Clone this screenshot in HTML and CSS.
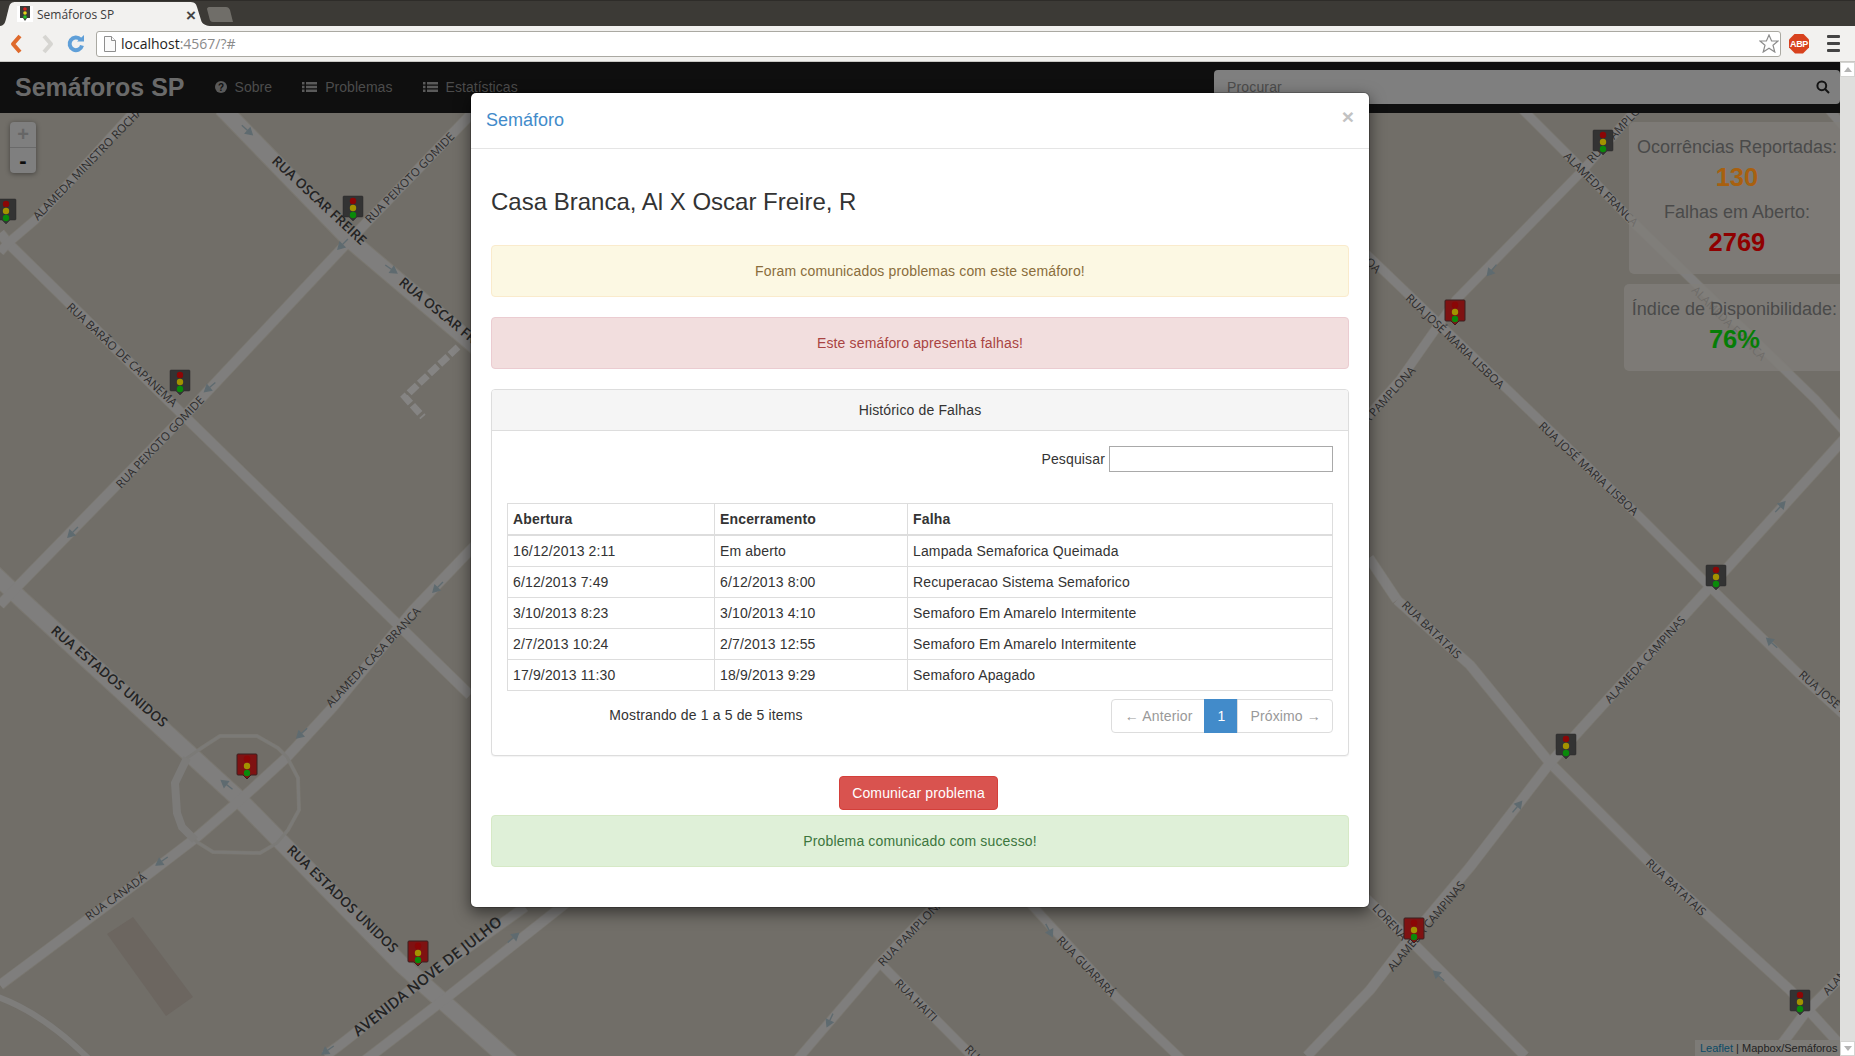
FILE: index.html
```html
<!DOCTYPE html>
<html lang="pt-BR">
<head>
<meta charset="utf-8">
<title>Semáforos SP</title>
<link rel="stylesheet" href="styles.css">
</head>
<body>
<div class="tabstrip">
  <div class="tab">
    <svg class="tab-shape" width="214" height="24" viewBox="0 2 214 24"><path d="M0 26C5 26 6 23 7 19L10 7C11 3 13 2 17 2H190C195 2 197 3 198 7L202 20C203 24 207 26 213 26Z"/></svg>
    <span class="favicon"><svg width="16" height="16" viewBox="0 0 16 16"><path class="fav-body" d="M3 0H13V12H10L8 15L6 12H3Z"/><circle class="lamp-r" cx="8" cy="3" r="1.8"/><circle class="lamp-y" cx="8" cy="7" r="1.8"/><circle class="lamp-g" cx="8" cy="11" r="1.8"/></svg></span>
    <span class="tab-title">Semáforos SP</span>
    <span class="tab-close">×</span>
  </div>
  <svg class="newtab" width="26" height="15" viewBox="0 0 26 15"><path d="M2 0H19C21 0 22 1 23 3L26 15H6C4 15 3 14 2.600 12L0 2C0 1 1 0 2 0Z"/></svg>
</div>
<div class="toolbar">
  <svg class="tb-btn" width="26" height="22" viewBox="0 0 26 22"><path class="ic-back" d="M16 3L9 11L16 19" /></svg>
  <svg class="tb-btn tb-fwd" width="26" height="22" viewBox="0 0 26 22"><path class="ic-fwd" d="M10 3L17 11L10 19"/></svg>
  <svg class="tb-btn tb-reload" width="20" height="20" viewBox="0 0 20 20"><path class="ic-reload" d="M14.500 5.500A6.300 6.300 0 1 0 16 11.500"/><path class="ic-reload-head" d="M11 7.500H18V1Z"/></svg>
  <div class="omnibox">
    <svg class="doc" width="12" height="16" viewBox="0 0 12 16"><path d="M.5.500H7.500L11.500 4.500V15.500H.5Z"/><path d="M7.500.500V4.500H11.500"/></svg>
    <span class="url">localhost<span class="url-rest">:4567/?#</span></span>
    <svg class="star" width="20" height="19" viewBox="0 0 20 19"><path d="M10 1L12.600 7H19L14 11.200L15.800 18L10 14.200L4.200 18L6 11.200L1 7H7.400Z"/></svg>
  </div>
  <div class="abp"><span>ABP</span></div>
  <div class="menu"><i></i><i></i><i></i></div>
</div>
<div class="page">
  <div class="viewport">
    <svg class="map" width="1840" height="994" viewBox="0 62 1840 994">
      <defs>
        <g id="wide">
          <path d="M222 108L350 240L480 350"/>
          <path d="M-15 565L22 600L193 757L240 800L400 963L430 990L520 1070"/>
        </g>
        <g id="mid">
          <path d="M0 233L8 243L178 410L470 695"/>
          <path d="M480 105L367 222L347 243L190 410L17 587L0 605"/>
          <path d="M480 540L413 610L333 707L287 757L240 800L197 837L150 873L0 985"/>
          <path d="M1397 600L1470 665L1550 763L1647 860L1790 990L1845 1050"/>
          <path d="M1369 558L1397 600"/>
          <path d="M1845 438L1710 587L1550 763L1470 867L1403 947L1370 990L1307 1056"/>
          <path d="M1360 893L1413 943L1525 1056"/>
          <path d="M525 907L427 977L340 1045L325 1056"/>
          <path d="M570 900L450 995L320 1095"/>
          <path d="M1845 973L1805 1013L1770 1060"/>
        </g>
        <g id="thin">
          <path d="M140 105L35 220L8 243L0 252"/>
          <path d="M1360 248L1508 390L1640 517L1710 587L1798 673L1845 716"/>
          <path d="M1518 105L1583 170L1638 227L1816 400L1845 432"/>
          <path d="M1640 105L1583 170L1456 300L1400 380L1360 425"/>
          <path d="M1825 105L1845 128"/>
          <path d="M940 900L880 963L797 1060"/>
          <path d="M880 963L976 1060"/>
          <path d="M1027 900L1116 997L1182 1060"/>
        </g>
        <g id="ring">
          <path d="M220 736H257L278 748L287 757L298 778L299 810L288 830L277 843L260 853L213 852L197 842L182 827L177 813L175 783L187 758L203 747Z"/>
        </g>
        <path id="arrow" d="M-7 0H3M7 0L1-3.500V3.500Z"/>
        <g id="lamps">
          <circle class="lamp-r" cx="0" cy="5" r="3.200"/>
          <circle class="lamp-y" cx="0" cy="12" r="3.200"/>
          <circle class="lamp-g" cx="0" cy="19" r="3.200"/>
        </g>
        <path id="pin" d="M-9 0H9Q10 0 10 1V20Q10 21 9 21H4L0 25L-4 21H-9Q-10 21-10 20V1Q-10 0-9 0Z"/>
      </defs>

      <path class="building" d="M133 917L193 997L166 1016L107 934Z"/>
      <path class="curve" d="M-5 996C30 1008 60 1030 90 1060"/>
      <path class="dash" d="M458 347L410 392L405 397L423 417"/>

      <use href="#wide" class="case w16"/>
      <use href="#mid" class="case w11"/>
      <use href="#thin" class="case w10"/>
      <use href="#ring" class="case w5"/>
      <use href="#wide" class="fill w16f"/>
      <use href="#mid" class="fill w11f"/>
      <use href="#thin" class="fill w10f"/>
      <use href="#ring" class="fill w5f"/>
      <path class="leftarc" d="M187 758L175 783L177 813L182 827L195 840"/>

      <g class="arrows">
        <use href="#arrow" transform="translate(247 130) rotate(42)"/>
        <use href="#arrow" transform="translate(343 244) rotate(135)"/>
        <use href="#arrow" transform="translate(391 269) rotate(35)"/>
        <use href="#arrow" transform="translate(210 387) rotate(140)"/>
        <use href="#arrow" transform="translate(73 532) rotate(135)"/>
        <use href="#arrow" transform="translate(438 587) rotate(135)"/>
        <use href="#arrow" transform="translate(227 785) rotate(218)"/>
        <use href="#arrow" transform="translate(302 733) rotate(137)"/>
        <use href="#arrow" transform="translate(162 861) rotate(145)"/>
        <use href="#arrow" transform="translate(328 1050) rotate(145)"/>
        <use href="#arrow" transform="translate(494 923) rotate(145)"/>
        <use href="#arrow" transform="translate(513 938) rotate(-40)"/>
        <use href="#arrow" transform="translate(830 1020) rotate(115)"/>
        <use href="#arrow" transform="translate(1049 930) rotate(62)"/>
        <use href="#arrow" transform="translate(1772 643) rotate(222)"/>
        <use href="#arrow" transform="translate(1517 807) rotate(-50)"/>
        <use href="#arrow" transform="translate(1439 976) rotate(222)"/>
        <use href="#arrow" transform="translate(1780 507) rotate(-47)"/>
        <use href="#arrow" transform="translate(1492 270) rotate(130)"/>
      </g>

      <g class="labels">
        <text x="38" y="221" transform="rotate(-46 38 221)">ALAMEDA MINISTRO ROCHA</text>
        <text class="strong" x="271" y="162" transform="rotate(43 271 162)">RUA OSCAR FREIRE</text>
        <text class="strong" x="398" y="284" transform="rotate(39 398 284)">RUA OSCAR FREIRE</text>
        <text x="370" y="224" transform="rotate(-45.500 370 224)">RUA PEIXOTO GOMIDE</text>
        <text x="66" y="308" transform="rotate(43 66 308)">RUA BARÃO DE CAPANEMA</text>
        <text x="121" y="489" transform="rotate(-46.500 121 489)">RUA PEIXOTO GOMIDE</text>
        <text class="strong" x="50" y="632" transform="rotate(40.500 50 632)">RUA ESTADOS UNIDOS</text>
        <text class="strong" x="286" y="851" transform="rotate(44 286 851)">RUA ESTADOS UNIDOS</text>
        <text x="331" y="708" transform="rotate(-46.800 331 708)">ALAMEDA CASA BRANCA</text>
        <text x="89" y="921" transform="rotate(-35.700 89 921)">RUA CANADÁ</text>
        <text class="avenue" x="358" y="1037" transform="rotate(-38 358 1037)">AVENIDA NOVE DE JULHO</text>
        <text x="1563" y="157" transform="rotate(45 1563 157)">ALAMEDA FRANCA</text>
        <text x="1691" y="291" transform="rotate(45 1691 291)">ALAMEDA FRANCA</text>
        <text x="1592" y="164" transform="rotate(-47 1592 164)">RUA PAMPLONA</text>
        <text class="end" x="1416" y="371" transform="rotate(-48 1416 371)">RUA PAMPLONA</text>
        <text x="1405" y="299" transform="rotate(43.800 1405 299)">RUA JOSÉ MARIA LISBOA</text>
        <text x="1538" y="427" transform="rotate(43 1538 427)">RUA JOSÉ MARIA LISBOA</text>
        <text class="end" x="1376" y="274" transform="rotate(45 1376 274)">LISBOA</text>
        <text x="1401" y="606" transform="rotate(44 1401 606)">RUA BATATAIS</text>
        <text x="1645" y="864" transform="rotate(43 1645 864)">RUA BATATAIS</text>
        <text x="1610" y="704" transform="rotate(-47.600 1610 704)">ALAMEDA CAMPINAS</text>
        <text x="1393" y="972" transform="rotate(-50 1393 972)">ALAMEDA CAMPINAS</text>
        <text class="end" x="1402" y="941" transform="rotate(47 1402 941)">LORENA</text>
        <text x="1798" y="676" transform="rotate(41 1798 676)">RUA JOSÉ MARIA LISBOA</text>
        <text x="1828" y="996" transform="rotate(-48 1828 996)">ALAMEDA</text>
        <text x="1056" y="941" transform="rotate(46 1056 941)">RUA GUARARÁ</text>
        <text x="883" y="967" transform="rotate(-46 883 967)">RUA PAMPLONA</text>
        <text x="894" y="984" transform="rotate(45 894 984)">RUA HAITI</text>
        <text x="964" y="1050" transform="rotate(45 964 1050)">RUA</text>
      </g>

      <g class="pins-dark">
        <g transform="translate(353 196)"><use href="#pin"/><use href="#lamps"/></g>
        <g transform="translate(180 370)"><use href="#pin"/><use href="#lamps"/></g>
        <g transform="translate(6 199)"><use href="#pin"/><use href="#lamps"/></g>
        <g transform="translate(1603 130)"><use href="#pin"/><use href="#lamps"/></g>
        <g transform="translate(1716 565)"><use href="#pin"/><use href="#lamps"/></g>
        <g transform="translate(1566 734)"><use href="#pin"/><use href="#lamps"/></g>
        <g transform="translate(1800 990)"><use href="#pin"/><use href="#lamps"/></g>
      </g>
      <g class="pins-red">
        <g transform="translate(247 754)"><use href="#pin"/><use href="#lamps"/></g>
        <g transform="translate(418 941)"><use href="#pin"/><use href="#lamps"/></g>
        <g transform="translate(1455 300)"><use href="#pin"/><use href="#lamps"/></g>
        <g transform="translate(1414 918)"><use href="#pin"/><use href="#lamps"/></g>
      </g>
    </svg>

    <nav class="navbar">
      <a class="brand">Semáforos SP</a>
      <a class="nav-link">
        <svg class="nav-ic" width="12" height="14" viewBox="0 0 12 14"><circle cx="6" cy="7" r="6"/><text class="q" x="6" y="10.500">?</text></svg>Sobre
      </a>
      <a class="nav-link">
        <svg class="nav-ic list" width="15" height="14" viewBox="0 0 15 14"><path d="M0 2H2.500V4.500H0ZM4 2H15V4.500H4ZM0 5.800H2.500V8.300H0ZM4 5.800H15V8.300H4ZM0 9.600H2.500V12.100H0ZM4 9.600H15V12.100H4Z"/></svg>Problemas
      </a>
      <a class="nav-link">
        <svg class="nav-ic list" width="15" height="14" viewBox="0 0 15 14"><path d="M0 2H2.500V4.500H0ZM4 2H15V4.500H4ZM0 5.800H2.500V8.300H0ZM4 5.800H15V8.300H4ZM0 9.600H2.500V12.100H0ZM4 9.600H15V12.100H4Z"/></svg>Estatísticas
      </a>
      <div class="search">
        <span class="search-ph">Procurar</span>
        <svg class="search-ic" width="14" height="14" viewBox="0 0 14 14"><circle cx="5.800" cy="5.800" r="4.400"/><path d="M9 9L13 13"/></svg>
      </div>
    </nav>

    <div class="zoomctl">
      <div class="zoom-in">+</div>
      <div class="zoom-out">-</div>
    </div>

    <div class="legends">
      <div class="legend">
        <div class="stat"><div class="stat-label">Ocorrências Reportadas:</div><div class="stat-value orange">130</div></div>
        <div class="stat"><div class="stat-label">Falhas em Aberto:</div><div class="stat-value red">2769</div></div>
      </div>
      <div class="legend">
        <div class="stat"><div class="stat-label">Índice de Disponibilidade:</div><div class="stat-value green">76%</div></div>
      </div>
    </div>

    <div class="attribution"><span class="attr-link">Leaflet</span> | Mapbox/Semáforos SP</div>

    <div class="overlay">
      <div class="modal">
        <div class="modal-header">
          <span class="modal-close">×</span>
          <h4 class="modal-title">Semáforo</h4>
        </div>
        <div class="modal-body">
          <h3 class="place">Casa Branca, Al X Oscar Freire, R</h3>
          <div class="alert alert-warning">Foram comunicados problemas com este semáforo!</div>
          <div class="alert alert-danger">Este semáforo apresenta falhas!</div>
          <div class="panel">
            <div class="panel-heading">Histórico de Falhas</div>
            <div class="panel-body">
              <div class="filter"><label class="filter-label" for="q">Pesquisar</label><input class="filter-input" id="q" type="text"></div>
              <table class="history">
                <thead>
                  <tr><th class="col-a">Abertura</th><th class="col-b">Encerramento</th><th>Falha</th></tr>
                </thead>
                <tbody>
                  <tr><td>16/12/2013 2:11</td><td>Em aberto</td><td>Lampada Semaforica Queimada</td></tr>
                  <tr><td>6/12/2013 7:49</td><td>6/12/2013 8:00</td><td>Recuperacao Sistema Semaforico</td></tr>
                  <tr><td>3/10/2013 8:23</td><td>3/10/2013 4:10</td><td>Semaforo Em Amarelo Intermitente</td></tr>
                  <tr><td>2/7/2013 10:24</td><td>2/7/2013 12:55</td><td>Semaforo Em Amarelo Intermitente</td></tr>
                  <tr><td>17/9/2013 11:30</td><td>18/9/2013 9:29</td><td>Semaforo Apagado</td></tr>
                </tbody>
              </table>
              <div class="table-foot">
                <div class="info">Mostrando de 1 a 5 de 5 items</div>
                <ul class="pagination">
                  <li class="page-item">← Anterior</li>
                  <li class="page-item active">1</li>
                  <li class="page-item">Próximo →</li>
                </ul>
              </div>
            </div>
          </div>
          <div class="action"><button class="btn-danger" type="button">Comunicar problema</button></div>
          <div class="alert alert-success">Problema comunicado com sucesso!</div>
        </div>
      </div>
    </div>
  </div>
  <div class="scrollbar">
    <div class="sb-btn"><span class="sb-up"></span></div>
    <div class="sb-btn"><span class="sb-down"></span></div>
  </div>
</div>
</body>
</html>
```
FILE: styles.css
```css
* { box-sizing: border-box; }
html, body { margin: 0; padding: 0; }
body {
  width: 1855px;
  height: 1056px;
  overflow: hidden;
  display: flex;
  flex-direction: column;
  font-family: "Liberation Sans", Arial, sans-serif;
  font-size: 14px;
  line-height: 20px;
  color: #333;
  background: #716e68;
}

/* Browser chrome */
.tabstrip {
  height: 26px;
  flex: none;
  background: #3c3a36;
  border-top: 1px solid #2e2c29;
  padding-top: 1px;
  display: flex;
  align-items: flex-start;
  position: relative;
}
.tab {
  position: relative;
  width: 205px;
  height: 24px;
  margin-left: -1px;
  display: flex;
  align-items: center;
  padding-left: 18px;
}
.tab-shape { position: absolute; left: 0; top: 0; }
.tab-shape path { fill: #f2f1ef; }
.favicon {
  position: relative;
  width: 16px;
  height: 16px;
  background: #fff;
  margin-right: 4px;
}
.favicon svg { display: block; }
.fav-body { fill: #3a3a38; }
.lamp-r { fill: #8b0606; }
.lamp-y { fill: #a39200; }
.lamp-g { fill: #0a8a0a; }
.favicon .lamp-r { fill: #d8201a; }
.favicon .lamp-y { fill: #e6d21c; }
.favicon .lamp-g { fill: #25c025; }
.tab-title {
  position: relative;
  top: 1px;
  font-family: "Open Sans", sans-serif;
  font-size: 12px;
  color: #3c3c3c;
  width: 149px;
}
.tab-close {
  position: relative;
  top: 2px;
  font-size: 17px;
  font-weight: bold;
  color: #444;
}
.newtab { margin: 5px 0 0 3px; }
.newtab path { fill: #706e69; }

.toolbar {
  height: 36px;
  flex: none;
  background: #f2f1ef;
  border-bottom: 1px solid #c9c8c4;
  display: flex;
  align-items: center;
  padding-left: 4px;
}
.tb-btn { flex: none; }
.tb-fwd { margin-left: 4px; }
.tb-reload { margin-left: 6px; margin-right: 10px; }
.ic-back { fill: none; stroke: #df6a2c; stroke-width: 4; stroke-linejoin: round; }
.ic-fwd { fill: none; stroke: #d6d5d1; stroke-width: 4; stroke-linejoin: round; }
.ic-reload { fill: none; stroke: #5f9fd8; stroke-width: 4; }
.ic-reload-head { fill: #5f9fd8; }
.omnibox {
  width: 1685px;
  height: 26px;
  flex: none;
  background: #fff;
  border: 1px solid #aaa9a2;
  border-radius: 3px;
  display: flex;
  align-items: center;
  padding-left: 7px;
}
.doc { flex: none; margin-right: 5px; }
.doc path { fill: #fafafa; stroke: #8e8e8e; }
.url {
  font-family: "Open Sans", sans-serif;
  font-size: 14px;
  color: #1e1e1e;
}
.url-rest { color: #8a8a8a; }
.star { margin-left: auto; margin-right: 1px; }
.star path { fill: #fdfdfd; stroke: #8c8c8c; stroke-width: 1.200; }
.abp {
  width: 20px;
  height: 20px;
  margin-left: 8px;
  background: #d8421e;
  clip-path: polygon(30% 0, 70% 0, 100% 30%, 100% 70%, 70% 100%, 30% 100%, 0 70%, 0 30%);
  display: flex;
  align-items: center;
  justify-content: center;
  color: #fff;
  font-size: 9px;
  font-weight: bold;
  letter-spacing: -.3px;
}
.menu {
  margin-left: 18px;
  width: 13px;
  display: flex;
  flex-direction: column;
  gap: 4px;
}
.menu i { display: block; height: 3px; background: #444; border-radius: 1px; }

/* Page */
.page { flex: 1; display: flex; min-height: 0; }
.viewport {
  position: relative;
  flex: 1;
  min-width: 0;
  overflow: hidden;
  background: #716e68;
}
.scrollbar {
  width: 15px;
  flex: none;
  background: #dfdfdd;
  display: flex;
  flex-direction: column;
  justify-content: space-between;
}
.sb-btn {
  height: 15px;
  background: #fff;
  border: 1px solid #d4d4d2;
  display: flex;
  align-items: center;
  justify-content: center;
}
.sb-up { border: 4px solid transparent; border-top: 0; border-bottom: 5px solid #b4b4b4; }
.sb-down { border: 4px solid transparent; border-bottom: 0; border-top: 5px solid #b4b4b4; }

/* Map */
.map { position: absolute; left: 0; top: 0; display: block; }
.building { fill: #6c6660; }
.curve { fill: none; stroke: #7e7d7b; stroke-width: 6; }
.dash { fill: none; stroke: #858483; stroke-width: 7; stroke-dasharray: 11 3; }
.case, .fill { fill: none; stroke-linejoin: round; }
.case { stroke: #7a7770; }
.fill { stroke: #7f7e7d; }
.w16 { stroke-width: 18; }
.w16f { stroke-width: 16; }
.w11 { stroke-width: 11; }
.w11f { stroke-width: 9.500; }
.w10 { stroke-width: 10; }
.w10f { stroke-width: 8.500; }
.w5 { stroke-width: 4; }
.w5f { stroke-width: 3; stroke: #7b7a77; }
.leftarc { fill: none; stroke: #7c7b79; stroke-width: 8; }
.arrows { fill: #5f6b70; stroke: #5f6b70; stroke-width: 1.400; }
.labels text {
  font-family: "Open Sans", sans-serif;
  font-size: 11.500px;
  fill: #2c2b2b;
}
.labels .strong { font-size: 13.600px; font-weight: 600; fill: #232323; }
.labels .avenue { font-size: 15px; font-weight: 600; fill: #232323; }
.labels .end { text-anchor: end; }
.pins-dark use:first-child { fill: #333; stroke: #2a2a2a; stroke-width: .5; }
.pins-red use:first-child { fill: #7f1212; stroke: #3a2020; stroke-width: 1; }

/* Navbar */
.navbar {
  position: relative;
  height: 51px;
  padding-bottom: 2px;
  background: #0f0f0f;
  display: flex;
  align-items: center;
}
.brand {
  padding: 0 15px;
  font-size: 25px;
  font-weight: bold;
  color: #6a6a6a;
}
.nav-link {
  display: flex;
  align-items: center;
  padding: 0 15px;
  color: #4c4c4c;
  font-family: "Liberation Sans", sans-serif;
  letter-spacing: .05px;
}
.nav-ic { margin-right: 8px; flex: none; fill: #5a5a5a; }
.nav-ic.list { fill: #5a5a5a; }
.q {
  font-family: "Liberation Sans", sans-serif;
  font-size: 10px;
  font-weight: bold;
  text-anchor: middle;
  fill: #0f0f0f;
}
.search {
  position: absolute;
  right: 0;
  top: 8px;
  width: 626px;
  height: 34px;
  background: #7f7f7f;
  border-radius: 4px;
  display: flex;
  align-items: center;
  justify-content: space-between;
  padding: 0 10px 0 13px;
}
.search-ph { color: #4c4c4c; letter-spacing: .15px; }
.search-ic { fill: none; stroke: #141414; stroke-width: 2; }

/* Map controls */
.zoomctl {
  position: absolute;
  left: 10px;
  top: 60px;
  width: 26px;
  border-radius: 4px;
  box-shadow: 0 1px 5px rgba(0, 0, 0, .4);
  background: #7f7f7f;
  text-align: center;
  overflow: hidden;
}
.zoom-in, .zoom-out { height: 25.500px; font-weight: bold; line-height: 25px; }
.zoom-in { color: #666; font-size: 20px; border-bottom: 1px solid #6a6a6a; }
.zoom-out { color: #0c0c0c; font-size: 22px; }

.legends {
  position: absolute;
  right: -5px;
  top: 60px;
  display: flex;
  flex-direction: column;
  align-items: flex-end;
  gap: 10px;
}
.legend {
  padding: 10px 8px 17px;
  background: rgba(128, 126, 122, .78);
  border-radius: 5px;
  text-align: center;
}
.stat + .stat { margin-top: 5px; }
.stat-label { font-size: 18px; line-height: 30px; color: #4a4a4a; }
.stat-value { font-size: 25.500px; line-height: 30px; font-weight: bold; }
.orange { color: #a8600f; }
.red { color: #8f0000; }
.green { color: #067d06; }

.attribution {
  position: absolute;
  right: 0;
  bottom: 0;
  width: 145px;
  height: 16px;
  padding-left: 5px;
  background: #7d7b77;
  font-size: 11px;
  line-height: 16px;
  color: #232323;
  white-space: nowrap;
  overflow: hidden;
}
.attr-link { color: #0b4a66; }

/* Modal */
.overlay {
  position: absolute;
  left: 0;
  top: 0;
  width: 100%;
  height: 100%;
  padding-top: 30px;
}
.modal {
  width: 900px;
  margin: 0 auto;
  background: #fff;
  border: 1px solid rgba(0, 0, 0, .2);
  background-clip: padding-box;
  border-radius: 6px;
  box-shadow: 0 5px 15px rgba(0, 0, 0, .5);
}
.modal-header {
  height: 56px;
  padding: 14px 15px 15px;
  border-bottom: 1px solid #e5e5e5;
}
.modal-title {
  margin: 0;
  font-size: 18px;
  font-weight: normal;
  line-height: 26px;
  color: #428bca;
}
.modal-close {
  float: right;
  margin-top: -1px;
  font-size: 21px;
  font-weight: bold;
  line-height: 21px;
  color: #c2c2c2;
}
.modal-body { padding: 20px; }
.place {
  margin: 20px 0 30px;
  font-size: 24px;
  font-weight: normal;
  line-height: 26px;
  color: #333;
}
.alert {
  height: 52px;
  padding: 15px;
  margin-bottom: 20px;
  border: 1px solid transparent;
  border-radius: 4px;
  text-align: center;
  letter-spacing: .15px;
}
.alert-warning { background: #fcf8e3; border-color: #faebcc; color: #8a6d3b; }
.alert-danger { background: #f2dede; border-color: #ebccd1; color: #a94442; }
.alert-success { background: #dff0d8; border-color: #d6e9c6; color: #3c763d; }
.panel {
  background: #fff;
  border: 1px solid #ddd;
  border-radius: 4px;
  box-shadow: 0 1px 1px rgba(0, 0, 0, .05);
  margin-bottom: 20px;
  letter-spacing: .15px;
}
.panel-heading {
  height: 41px;
  padding: 10px 15px;
  background: #f5f5f5;
  border-bottom: 1px solid #ddd;
  border-radius: 3px 3px 0 0;
  text-align: center;
}
.panel-body { padding: 15px 15px 22px; }
.filter {
  display: flex;
  justify-content: flex-end;
  align-items: center;
  gap: 4px;
  margin-bottom: 31px;
}
.filter-input {
  width: 224px;
  height: 26px;
  border: 1px solid #a9a9a9;
  padding: 1px 2px;
  background: #fff;
}
.history {
  width: 100%;
  border-collapse: collapse;
  table-layout: fixed;
}
.history th, .history td {
  border: 1px solid #ddd;
  padding: 5px;
  text-align: left;
  vertical-align: top;
}
.history thead th { border-bottom-width: 2px; }
.col-a { width: 207px; }
.col-b { width: 193px; }
.table-foot {
  display: flex;
  justify-content: space-between;
  align-items: flex-start;
  margin-top: 8px;
}
.info { width: 398px; padding-top: 6px; text-align: center; }
.pagination {
  display: flex;
  margin: 0;
  padding: 0;
  list-style: none;
}
.page-item {
  height: 34px;
  padding: 6px 12px;
  border: 1px solid #ddd;
  margin-left: -1px;
  color: #999;
  background: #fff;
}
.page-item:first-child { border-radius: 4px 0 0 4px; padding-left: 13px; }
.page-item:last-child { border-radius: 0 4px 4px 0; padding-right: 11px; }
.page-item.active { background: #428bca; border-color: #428bca; color: #fff; }
.action { height: 39px; text-align: center; padding-right: 3px; }
.btn-danger {
  height: 34px;
  padding: 6px 12px;
  border: 1px solid #d43f3a;
  border-radius: 4px;
  background: #d9534f;
  color: #fff;
  font-family: "Liberation Sans", sans-serif;
  font-size: 14px;
  line-height: 20px;
  letter-spacing: .15px;
}
```
